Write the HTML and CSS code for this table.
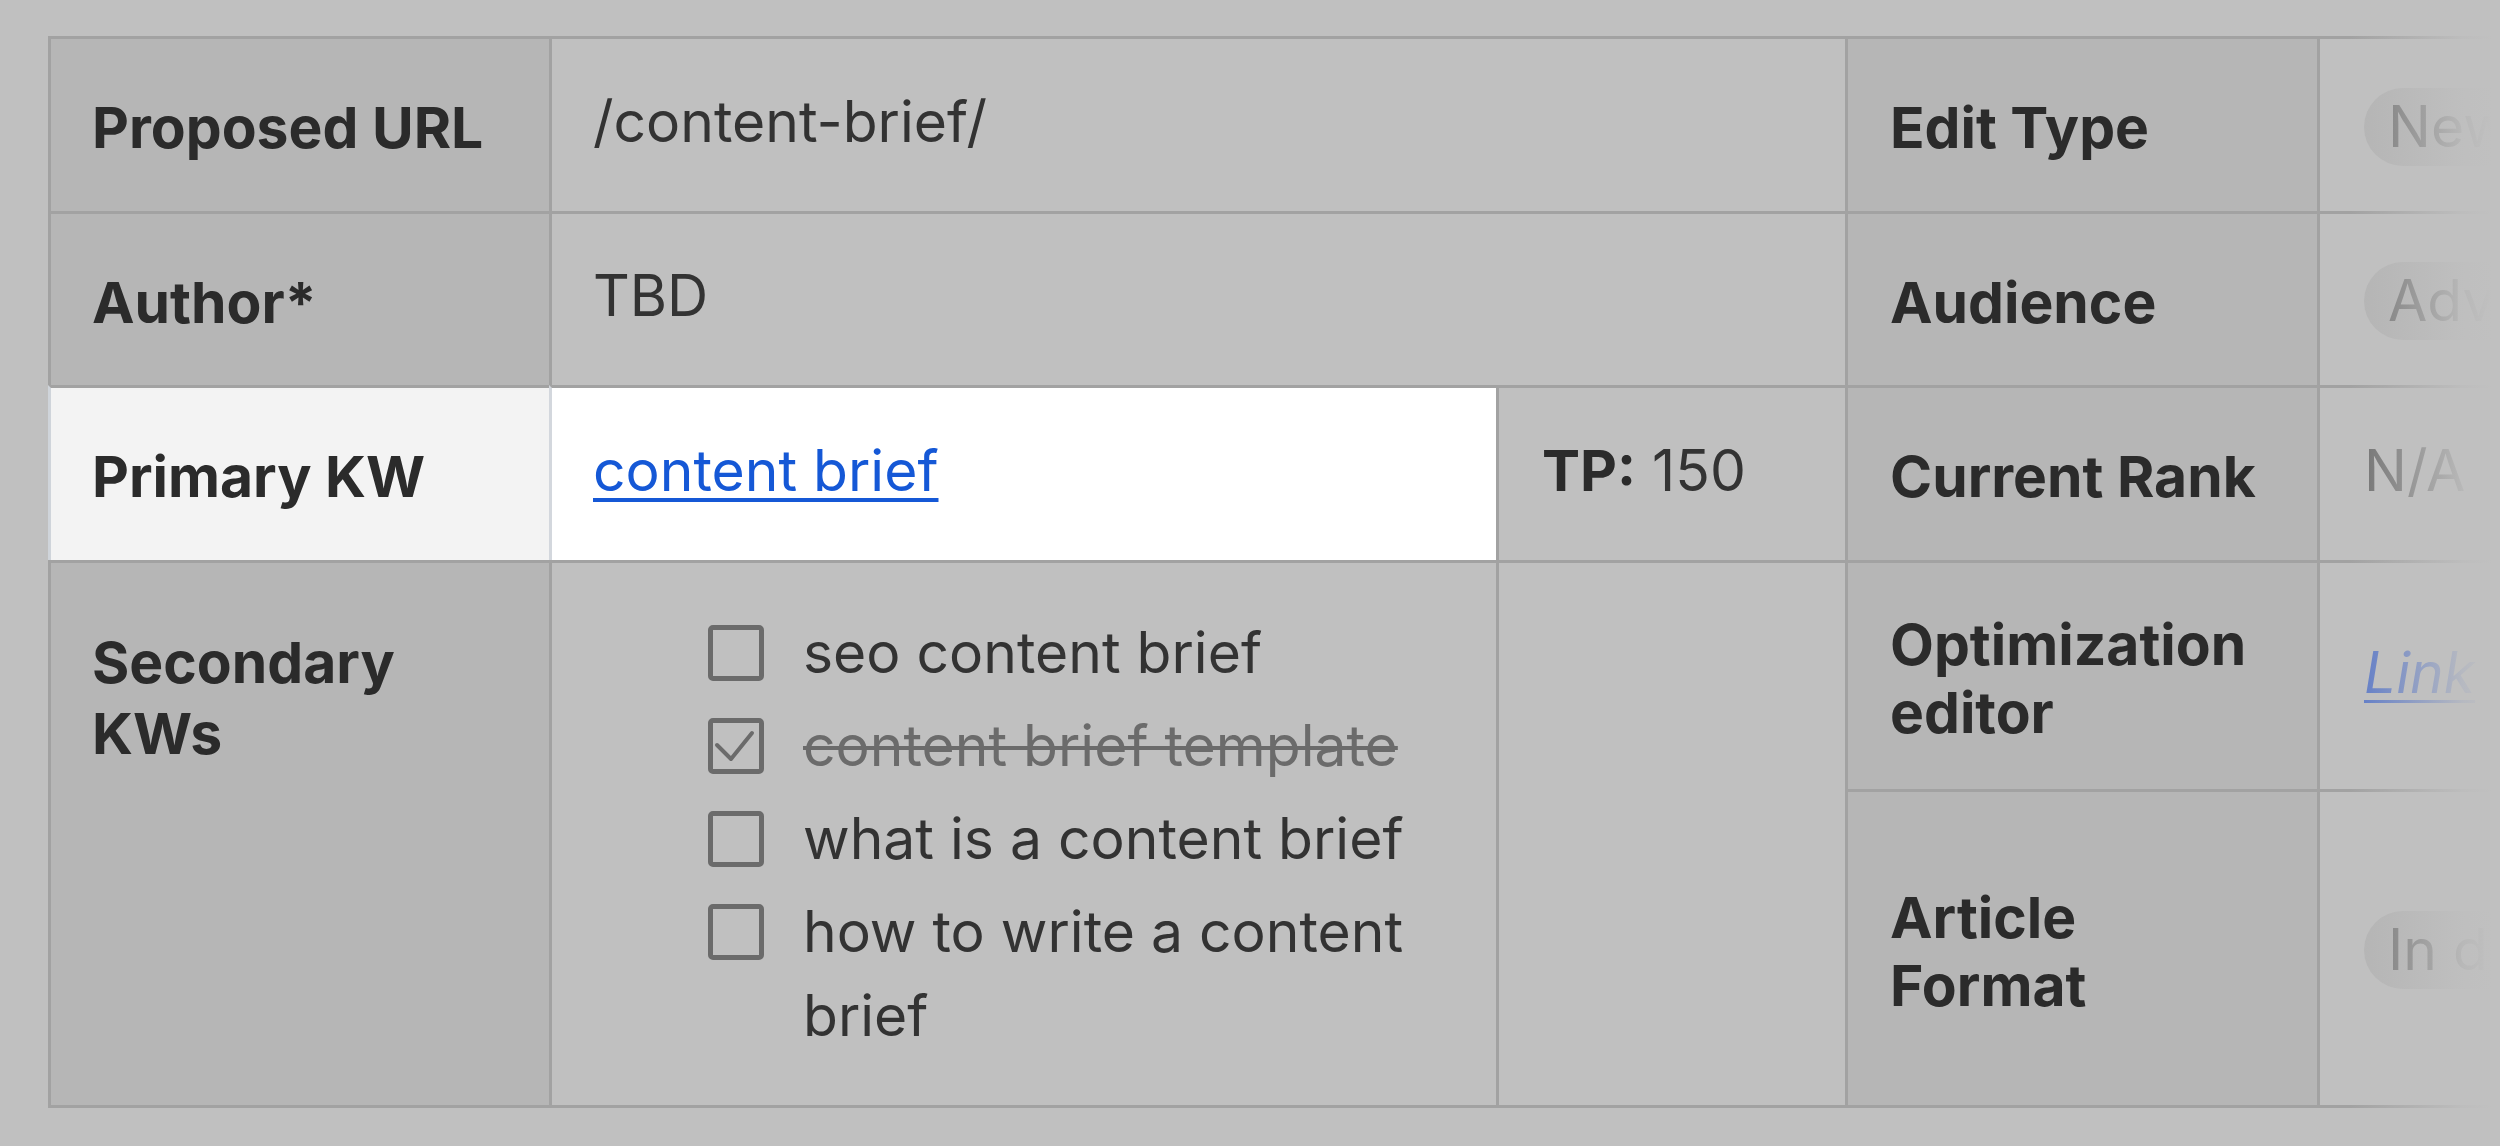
FILE: index.html
```html
<!DOCTYPE html>
<html lang="en">
<head>
<meta charset="utf-8">
<title>Content brief</title>
<link rel="stylesheet" href="styles.css">
</head>
<body>
<div class="page">
  <div class="brief">
    <div class="cell label">Proposed URL</div>
    <div class="cell value wide">/content-brief/</div>
    <div class="cell label side">Edit Type</div>
    <div class="cell value tail"><span class="pill">New content</span></div>

    <div class="cell label">Author*</div>
    <div class="cell value wide">TBD</div>
    <div class="cell label side">Audience</div>
    <div class="cell value tail"><span class="pill">Advanced</span></div>

    <div class="cell label hl-label">Primary KW</div>
    <div class="cell value hl-value"><a class="kw-link" href="#">content brief</a></div>
    <div class="cell value tp"><b>TP:</b>&nbsp;150</div>
    <div class="cell label side">Current Rank</div>
    <div class="cell value tail muted">N/A</div>

    <div class="cell label secondary">Secondary KWs</div>
    <div class="cell checklist-cell">
      <ul class="checklist">
        <li class="item"><span class="box"></span><span class="item-text">seo content brief</span></li>
        <li class="item done"><span class="box"><svg viewBox="0 0 56 56" width="56" height="56"><polyline points="9,27 23,41 44,15" fill="none" stroke="#6b6b6b" stroke-width="4" stroke-linecap="round" stroke-linejoin="round"/></svg></span><span class="item-text">content brief template</span></li>
        <li class="item"><span class="box"></span><span class="item-text">what is a content brief</span></li>
        <li class="item"><span class="box"></span><span class="item-text">how to write a content brief</span></li>
      </ul>
    </div>
    <div class="cell empty"></div>
    <div class="cell label side opt">Optimization editor</div>
    <div class="cell value tail opt-val"><a class="doc-link" href="#">Link</a></div>
    <div class="cell label side fmt">Article Format</div>
    <div class="cell value tail fmt-val"><span class="pill">In depth</span></div>
  </div>
  <div class="fade"></div>
</div>
</body>
</html>
```

FILE: styles.css
```css
html, body {
  margin: 0;
  padding: 0;
}

body {
  background: #c0c0c0;
  width: 2500px;
  height: 1146px;
  overflow: hidden;
  font-family: Inter, "Noto Sans", sans-serif;
  color: #2c2c2c;
}

.page {
  position: relative;
  width: 2500px;
  height: 1146px;
  overflow: hidden;
  padding: 36px 0 0 48px;
  box-sizing: border-box;
}

.brief {
  display: grid;
  grid-template-columns: 501px 947px 349px 472px 400px;
  grid-template-rows: 175px 174px 175px 229px 316px;
  width: max-content;
  border-bottom: 3px solid #a2a2a2;
}

.cell {
  box-sizing: border-box;
  border-top: 3px solid #a2a2a2;
  border-left: 3px solid #a2a2a2;
  display: flex;
  align-items: center;
  min-width: 0;
  font-size: 57px;
  line-height: 68px;
}

.label {
  background: #b6b6b6;
  font-weight: 700;
  padding: 6px 30px 0 41px;
  color: #2b2b2b;
}

.side {
  padding-left: 42px;
  padding-right: 55px;
}

.value {
  background: #c0c0c0;
  padding: 0 40px 7px 41px;
  color: #333333;
  font-weight: 400;
}

.wide {
  grid-column: span 2;
}

.tp {
  padding-left: 43px;
}

.tp b {
  font-weight: 700;
  color: #2b2b2b;
}

.hl-label {
  background: #f3f3f3;
  border-left-color: #cfd4da;
}

.hl-value {
  background: #ffffff;
  border-left-color: #d3d7dd;
}

.kw-link {
  color: #1558d6;
  text-decoration: underline;
  text-decoration-thickness: 4px;
  text-underline-offset: 7px;
}

.secondary {
  grid-row: span 2;
  align-items: flex-start;
  padding-top: 64px;
  line-height: 71px;
}

.checklist-cell {
  grid-row: span 2;
  background: #c0c0c0;
  display: block;
  padding: 48px 46px 0 156px;
}

.checklist {
  list-style: none;
  margin: 0;
  padding: 0;
}

.item {
  display: flex;
  align-items: flex-start;
  gap: 39px;
  line-height: 84px;
  margin-bottom: 9px;
  color: #333333;
}

.box {
  flex: none;
  width: 56px;
  height: 56px;
  margin-top: 14px;
  box-sizing: border-box;
  border: 5px solid #6b6b6b;
  border-radius: 5px;
  position: relative;
}

.box svg {
  position: absolute;
  left: -5px;
  top: -5px;
}

.done .item-text {
  color: #6b6b6b;
  text-decoration: line-through;
  text-decoration-thickness: 4px;
  text-decoration-color: #6b6b6b;
}

.empty {
  grid-row: span 2;
  background: #c0c0c0;
}

.opt {
  grid-row: 4;
  grid-column: 4;
}

.opt-val {
  grid-row: 4;
  grid-column: 5;
}

.fmt {
  grid-row: 5;
  grid-column: 4;
}

.fmt-val {
  grid-row: 5;
  grid-column: 5;
}

.tail {
  padding-left: 44px;
  white-space: nowrap;
  overflow: hidden;
  color: #707070;
}

.pill {
  display: inline-block;
  background: #b4b4b4;
  border-radius: 39px;
  height: 78px;
  line-height: 78px;
  padding: 0 24px;
  margin-top: 10px;
  color: #707070;
}

.muted {
  color: #6e6e6e;
}

.doc-link {
  color: #5a78c8;
  font-style: italic;
  text-decoration: underline;
  text-decoration-thickness: 3px;
  text-underline-offset: 7px;
}

.fade {
  position: absolute;
  top: 0;
  right: 0;
  width: 150px;
  height: 100%;
  background: linear-gradient(to right, rgba(192, 192, 192, 0) 0%, rgba(192, 192, 192, 0.55) 45%, rgba(192, 192, 192, 0.9) 75%, #c0c0c0 95%);
}
```
